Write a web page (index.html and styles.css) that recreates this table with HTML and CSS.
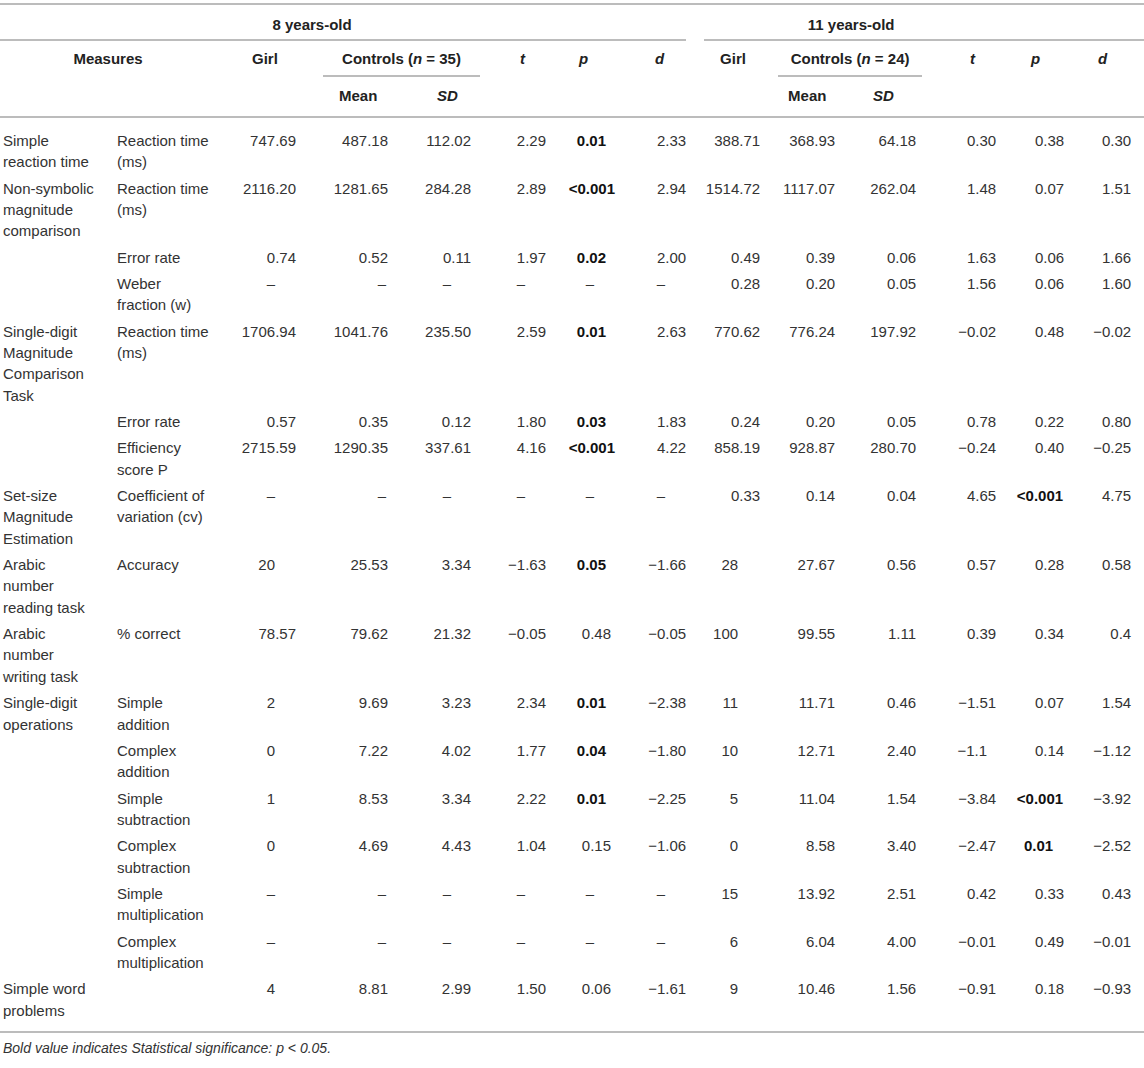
FILE: index.html
```html
<!DOCTYPE html>
<html lang="en">
<head>
  <meta charset="UTF-8">
  <meta name="viewport" content="width=device-width, initial-scale=1.0">
  <title>Table – 8 and 11 years-old</title>
  <link rel="stylesheet" href="styles.css">
</head>
<body>
  <div class="wrap">
    <table class="data">
      <colgroup>
        <col class="w1"><col class="w2"><col class="w3"><col class="w4"><col class="w5"><col class="w6"><col class="w7">
        <col class="w8"><col class="w9"><col class="w10"><col class="w11"><col class="w12"><col class="w13"><col class="w14">
      </colgroup>
      <thead>
        <tr class="r-age">
          <th colspan="8" class="age8"><div class="rule">8 years-old</div></th>
          <th colspan="6" class="age11"><div class="rule">11 years-old</div></th>
        </tr>
        <tr class="r-grp">
          <th colspan="2" rowspan="2" class="h-measures">Measures</th>
          <th rowspan="2" class="h-girl8">Girl</th>
          <th colspan="2" class="h-ctl8"><div class="rule">Controls (<i>n</i> = 35)</div></th>
          <th rowspan="2" class="h-t8"><i>t</i></th>
          <th rowspan="2" class="h-p8"><i>p</i></th>
          <th rowspan="2" class="h-d8"><i>d</i></th>
          <th rowspan="2" class="h-girl11">Girl</th>
          <th colspan="2" class="h-ctl11"><div class="rule">Controls (<i>n</i> = 24)</div></th>
          <th rowspan="2" class="h-t11"><i>t</i></th>
          <th rowspan="2" class="h-p11"><i>p</i></th>
          <th rowspan="2" class="h-d11"><i>d</i></th>
        </tr>
        <tr class="r-sub">
          <th class="h-mean8">Mean</th>
          <th class="h-sd8"><i>SD</i></th>
          <th class="h-mean11">Mean</th>
          <th class="h-sd11"><i>SD</i></th>
        </tr>
      </thead>
      <tbody>
        <tr>
          <td>Simple reaction time</td><td>Reaction time (ms)</td>
          <td>747.69</td><td>487.18</td><td>112.02</td><td>2.29</td><td class="sig">0.01</td><td>2.33</td>
          <td>388.71</td><td>368.93</td><td>64.18</td><td>0.30</td><td>0.38</td><td>0.30</td>
        </tr>
        <tr>
          <td>Non-symbolic magnitude comparison</td><td>Reaction time (ms)</td>
          <td>2116.20</td><td>1281.65</td><td>284.28</td><td>2.89</td><td class="sig lt">&lt;0.001</td><td>2.94</td>
          <td>1514.72</td><td>1117.07</td><td>262.04</td><td>1.48</td><td>0.07</td><td>1.51</td>
        </tr>
        <tr>
          <td></td><td>Error rate</td>
          <td>0.74</td><td>0.52</td><td>0.11</td><td>1.97</td><td class="sig">0.02</td><td>2.00</td>
          <td>0.49</td><td>0.39</td><td>0.06</td><td>1.63</td><td>0.06</td><td>1.66</td>
        </tr>
        <tr>
          <td></td><td>Weber fraction (w)</td>
          <td class="na">–</td><td class="na">–</td><td class="na">–</td><td class="na">–</td><td class="na">–</td><td class="na">–</td>
          <td>0.28</td><td>0.20</td><td>0.05</td><td>1.56</td><td>0.06</td><td>1.60</td>
        </tr>
        <tr>
          <td>Single-digit Magnitude Comparison Task</td><td>Reaction time (ms)</td>
          <td>1706.94</td><td>1041.76</td><td>235.50</td><td>2.59</td><td class="sig">0.01</td><td>2.63</td>
          <td>770.62</td><td>776.24</td><td>197.92</td><td>−0.02</td><td>0.48</td><td>−0.02</td>
        </tr>
        <tr>
          <td></td><td>Error rate</td>
          <td>0.57</td><td>0.35</td><td>0.12</td><td>1.80</td><td class="sig">0.03</td><td>1.83</td>
          <td>0.24</td><td>0.20</td><td>0.05</td><td>0.78</td><td>0.22</td><td>0.80</td>
        </tr>
        <tr>
          <td></td><td>Efficiency score P</td>
          <td>2715.59</td><td>1290.35</td><td>337.61</td><td>4.16</td><td class="sig lt">&lt;0.001</td><td>4.22</td>
          <td>858.19</td><td>928.87</td><td>280.70</td><td>−0.24</td><td>0.40</td><td>−0.25</td>
        </tr>
        <tr>
          <td>Set-size Magnitude Estimation</td><td>Coefficient of variation (cv)</td>
          <td class="na">–</td><td class="na">–</td><td class="na">–</td><td class="na">–</td><td class="na">–</td><td class="na">–</td>
          <td>0.33</td><td>0.14</td><td>0.04</td><td>4.65</td><td class="sig lt">&lt;0.001</td><td>4.75</td>
        </tr>
        <tr>
          <td>Arabic number reading task</td><td>Accuracy</td>
          <td class="int">20</td><td>25.53</td><td>3.34</td><td>−1.63</td><td class="sig">0.05</td><td>−1.66</td>
          <td class="int">28</td><td>27.67</td><td>0.56</td><td>0.57</td><td>0.28</td><td>0.58</td>
        </tr>
        <tr>
          <td>Arabic number writing task</td><td>% correct</td>
          <td>78.57</td><td>79.62</td><td>21.32</td><td>−0.05</td><td>0.48</td><td>−0.05</td>
          <td class="int">100</td><td>99.55</td><td>1.11</td><td>0.39</td><td>0.34</td><td>0.4</td>
        </tr>
        <tr>
          <td>Single-digit operations</td><td>Simple addition</td>
          <td class="int">2</td><td>9.69</td><td>3.23</td><td>2.34</td><td class="sig">0.01</td><td>−2.38</td>
          <td class="int">11</td><td>11.71</td><td>0.46</td><td>−1.51</td><td>0.07</td><td>1.54</td>
        </tr>
        <tr>
          <td></td><td>Complex addition</td>
          <td class="int">0</td><td>7.22</td><td>4.02</td><td>1.77</td><td class="sig">0.04</td><td>−1.80</td>
          <td class="int">10</td><td>12.71</td><td>2.40</td><td class="d1">−1.1</td><td>0.14</td><td>−1.12</td>
        </tr>
        <tr>
          <td></td><td>Simple subtraction</td>
          <td class="int">1</td><td>8.53</td><td>3.34</td><td>2.22</td><td class="sig">0.01</td><td>−2.25</td>
          <td class="int">5</td><td>11.04</td><td>1.54</td><td>−3.84</td><td class="sig lt">&lt;0.001</td><td>−3.92</td>
        </tr>
        <tr>
          <td></td><td>Complex subtraction</td>
          <td class="int">0</td><td>4.69</td><td>4.43</td><td>1.04</td><td>0.15</td><td>−1.06</td>
          <td class="int">0</td><td>8.58</td><td>3.40</td><td>−2.47</td><td class="sig">0.01</td><td>−2.52</td>
        </tr>
        <tr>
          <td></td><td>Simple multiplication</td>
          <td class="na">–</td><td class="na">–</td><td class="na">–</td><td class="na">–</td><td class="na">–</td><td class="na">–</td>
          <td class="int">15</td><td>13.92</td><td>2.51</td><td>0.42</td><td>0.33</td><td>0.43</td>
        </tr>
        <tr>
          <td></td><td>Complex multiplication</td>
          <td class="na">–</td><td class="na">–</td><td class="na">–</td><td class="na">–</td><td class="na">–</td><td class="na">–</td>
          <td class="int">6</td><td>6.04</td><td>4.00</td><td>−0.01</td><td>0.49</td><td>−0.01</td>
        </tr>
        <tr>
          <td>Simple word problems</td><td></td>
          <td class="int">4</td><td>8.81</td><td>2.99</td><td>1.50</td><td>0.06</td><td>−1.61</td>
          <td class="int">9</td><td>10.46</td><td>1.56</td><td>−0.91</td><td>0.18</td><td>−0.93</td>
        </tr>
      </tbody>
    </table>
    <p class="note">Bold value indicates Statistical significance: <i>p</i> &lt; 0.05.</p>
  </div>
</body>
</html>
```

FILE: styles.css
```css
body { margin: 0; background: #fff; font-family: "Liberation Sans", Arial, Helvetica, sans-serif; color: #333; }
.wrap { width: 1144px; padding-top: 3px; }

.data { width: 1144px; table-layout: fixed; border-collapse: collapse; font-size: 15px; line-height: 21.35px; border-top: 2px solid #bcbcbc; border-bottom: 2px solid #bcbcbc; }
.data thead { border-bottom: 2px solid #bcbcbc; }

.w1 { width: 113px; } .w2 { width: 103px; } .w3 { width: 84px; } .w4 { width: 92px; }
.w5 { width: 88px; } .w6 { width: 70px; } .w7 { width: 65px; } .w8 { width: 75px; }
.w9 { width: 74px; } .w10 { width: 75px; } .w11 { width: 83px; } .w12 { width: 78px; }
.w13 { width: 68px; } .w14 { width: 76px; }

/* header */
.data th { padding: 0; font-weight: bold; color: #222; text-align: left; vertical-align: top; white-space: nowrap; }
.rule { border-bottom: 2px solid #bcbcbc; }
.r-age .rule { padding: 8.5px 0 4.5px; text-align: center; }
.age8 .rule { margin-right: 4px; padding-right: 62px; }
.age11 { padding-left: 14px !important; }
.age11 .rule { padding-right: 146px; }

.r-grp th { padding-top: 7px; }
.r-grp .rule { padding-bottom: 5.3px; text-align: center; }
.h-measures { text-align: center !important; }
.h-ctl8 { padding-left: 23px !important; }
.h-ctl11 { padding-left: 14px !important; }
.r-sub th { padding-top: 8.3px; padding-bottom: 9.3px; }

.h-girl8 { padding-left: 36px !important; }
.h-mean8 { padding-left: 39px !important; }
.h-sd8 { padding-left: 45px !important; }
.h-t8 { padding-left: 40px !important; }
.h-p8 { padding-left: 29px !important; }
.h-d8 { padding-left: 40px !important; }
.h-girl11 { padding-left: 30px !important; }
.h-mean11 { padding-left: 24px !important; }
.h-sd11 { padding-left: 34px !important; }
.h-t11 { padding-left: 48px !important; }
.h-p11 { padding-left: 31px !important; }
.h-d11 { padding-left: 30px !important; }

/* body */
.data td { padding: 2px 4px 3px; text-align: right; vertical-align: top; }
.data tbody tr:first-child td { padding-top: 12px; }
.data tbody tr:last-child td { padding-bottom: 10px; }
.data td:nth-child(1) { text-align: left; padding-left: 3px; padding-right: 16px; }
.data td:nth-child(2) { text-align: left; padding-left: 4px; }
.data td:nth-child(5) { padding-right: 9px; }
.data td:nth-child(11) { padding-right: 6px; }
.data td:nth-child(14) { padding-right: 13px; }

.data td.sig { font-weight: bold; color: #111; }
.data td.sig:nth-child(7) { padding-right: 9px; }
.data td.sig.lt:nth-child(7) { padding-right: 0; }
.data td.sig:nth-child(13) { padding-right: 15px; }
.data td.sig.lt:nth-child(13) { padding-right: 5px; }

.data td.int:nth-child(3) { padding-right: 25px; }
.data td.int:nth-child(9) { padding-right: 26px; }
.data td.d1 { padding-right: 13px; }

.data td.na:nth-child(3) { padding-right: 25px; }
.data td.na:nth-child(4) { padding-right: 6px; }
.data td.na:nth-child(5) { padding-right: 29px; }
.data td.na:nth-child(6) { padding-right: 25px; }
.data td.na:nth-child(7) { padding-right: 21px; }
.data td.na:nth-child(8) { padding-right: 25px; }

.note { margin: 5px 0 0 3px; font-size: 14px; line-height: 20px; font-style: italic; color: #333; }
```
